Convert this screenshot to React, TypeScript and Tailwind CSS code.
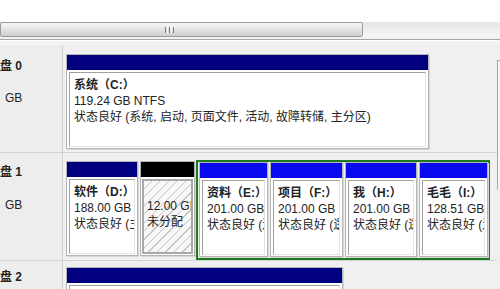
import React from 'react';

const FONT = { fontFamily: '"Liberation Sans", "Noto Sans CJK SC", sans-serif' };

type Part = {
  name?: string;
  size: string;
  status: string;
  width: string;
  bar: string;
  free?: boolean;
};

function Partition({ name, size, status, width, bar, free }: Part) {
  return (
    <div className={`${width} h-[95px] shrink-0 flex flex-col bg-white border border-[#b4b4b4] shadow-[1px_1px_0_#d8d8d8]`}>
      <div className={`h-[15px] shrink-0 ${bar}`} />
      {free ? (
        <div className="flex-1 mt-[2px] mx-[1px] mb-[1px] border-2 border-[#a8a8a8] bg-[repeating-linear-gradient(135deg,#f7f7f7_0px,#f7f7f7_5px,#c4c4c4_5px,#c4c4c4_6px)] pl-[3px] pt-[17px] overflow-hidden whitespace-nowrap text-[12px] leading-[16px] text-[#222]">
          <div>{size}</div>
          <div>{status}</div>
        </div>
      ) : (
        <div className="flex-1 mt-[2px] mx-[2px] mb-[1px] border-l border-t border-[#a0a0a0] border-r border-b border-r-[#e4e4e4] border-b-[#e4e4e4] bg-white pl-[4px] pt-[4px] overflow-hidden whitespace-nowrap text-[12px] leading-[16px] text-[#222]">
          <div className="font-bold">{name}</div>
          <div>{size}</div>
          <div>{status}</div>
        </div>
      )}
    </div>
  );
}

function DiskLabel({ title, pt, gap }: { title: string; pt: string; gap: string }) {
  return (
    <div className={`w-[63px] shrink-0 bg-[#ededed] border-r border-[#cfcfcf] ${pt} text-[12px] leading-[16px] text-[#222] overflow-hidden whitespace-nowrap`}>
      <div className="font-bold">{title}</div>
      <div className={`${gap} pl-[5px]`}>GB</div>
    </div>
  );
}

export default function App() {
  return (
    <div className="w-[500px] h-[289px] overflow-hidden bg-[#f0f0f0] flex flex-col" style={FONT}>
      {/* 顶部空白 */}
      <div className="h-[22px] shrink-0 bg-white" />

      {/* 横向滚动条 */}
      <div className="h-[15px] shrink-0 flex bg-gradient-to-b from-[#e6e6e6] to-[#f6f6f6]">
        <div className="w-[363px] h-full rounded-[2px] border border-[#9c9c9c] bg-gradient-to-b from-[#f6f6f6] via-[#e4e4e4] to-[#cfcfcf] flex items-center pl-[164px] gap-[1px]">
          <span className="w-[1px] h-[6px] bg-[#7a7a7a]" />
          <span className="w-[1px] h-[6px] bg-[#f8f8f8]" />
          <span className="w-[1px] h-[6px] bg-[#7a7a7a]" />
          <span className="w-[1px] h-[6px] bg-[#f8f8f8]" />
          <span className="w-[1px] h-[6px] bg-[#7a7a7a]" />
        </div>
      </div>
      <div className="h-[2px] shrink-0 bg-[#f2f2f2]" />
      <div className="h-[1px] shrink-0 bg-[#a6a6a6]" />
      <div className="h-[1px] shrink-0 bg-white" />
      <div className="h-[4px] shrink-0 bg-[#f3f3f3]" />

      <div className="flex flex-1 min-h-0">
        <div className="w-[497px] shrink-0 flex flex-col">
          {/* 磁盘 0 */}
          <div className="h-[108px] shrink-0 flex border-b border-[#d2d2d2]">
            <DiskLabel title="盘 0" pt="pt-[13px]" gap="mt-[16px]" />
            <div className="pl-[3px] pt-[9px]">
              <Partition
                name="系统（C:）"
                size="119.24 GB NTFS"
                status="状态良好 (系统, 启动, 页面文件, 活动, 故障转储, 主分区)"
                width="w-[363px]"
                bar="bg-[#000080]"
              />
            </div>
          </div>

          {/* 磁盘 1 */}
          <div className="h-[108px] shrink-0 flex border-b border-[#d2d2d2]">
            <DiskLabel title="盘 1" pt="pt-[11px]" gap="mt-[17px]" />
            <div className="pl-[3px] pt-[7px] flex items-start">
              <div className="pt-[1px] flex gap-[2px]">
                <Partition name="软件（D:）" size="188.00 GB" status="状态良好 (主分区)" width="w-[72px]" bar="bg-[#000080]" />
                <Partition free size="12.00 GB" status="未分配" width="w-[55px]" bar="bg-black" />
              </div>
              <div className="ml-[1px] w-[294px] h-[100px] border-2 border-[#1f7a1f] flex gap-[2px] pl-[1px]">
                <Partition name="资料（E:）" size="201.00 GB" status="状态良好 (逻辑驱动器)" width="w-[69px]" bar="bg-[#0a0af0]" />
                <Partition name="项目（F:）" size="201.00 GB" status="状态良好 (逻辑驱动器)" width="w-[73px]" bar="bg-[#0a0af0]" />
                <Partition name="我（H:）" size="201.00 GB" status="状态良好 (逻辑驱动器)" width="w-[72px]" bar="bg-[#0a0af0]" />
                <Partition name="毛毛（I:）" size="128.51 GB" status="状态良好 (逻辑驱动器)" width="w-[69px]" bar="bg-[#0a0af0]" />
              </div>
            </div>
          </div>

          {/* 磁盘 2 */}
          <div className="flex-1 flex">
            <DiskLabel title="盘 2" pt="pt-[8px]" gap="mt-[16px]" />
            <div className="pl-[3px] pt-[6px]">
              <Partition name="" size="" status="" width="w-[277px]" bar="bg-[#000080]" />
            </div>
          </div>
        </div>

        {/* 右侧窗格边缘 */}
        <div className="flex-1 pt-[15px]">
          <div className="h-[130px] border-l border-t border-[#a8a8a8] bg-[#f6f6f6]" />
        </div>
      </div>
    </div>
  );
}
